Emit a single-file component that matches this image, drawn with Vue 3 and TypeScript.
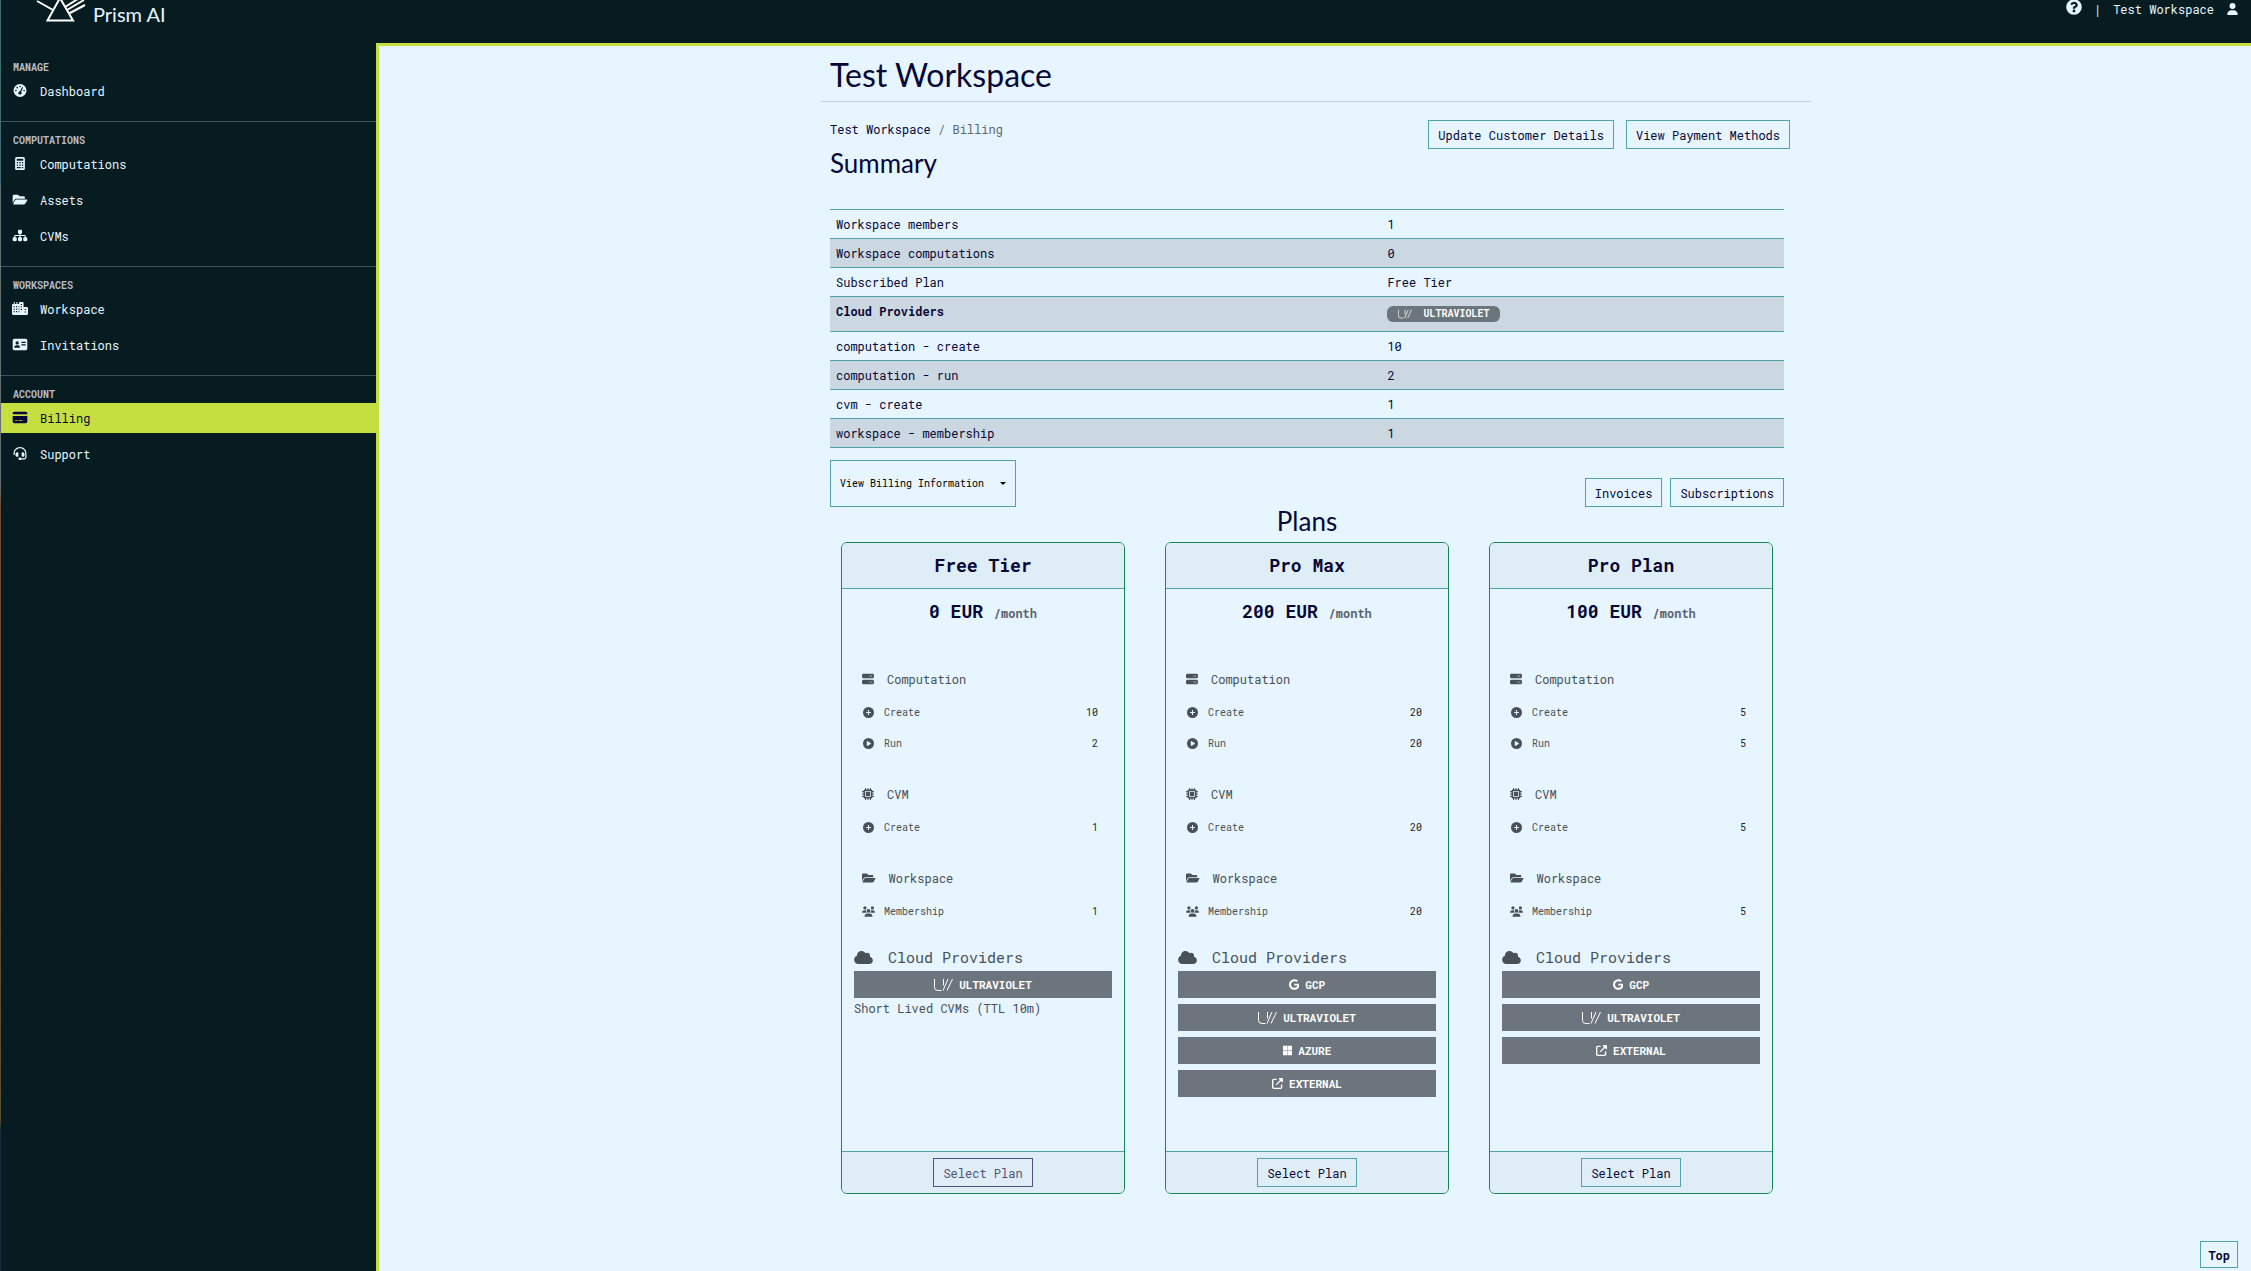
<script setup lang="ts">
interface Icon {
  w: number
  h: number
  d: string
}

const icons: Record<string, Icon> = {
  gauge: {
    w: 512,
    h: 512,
    d: 'M0 256a256 256 0 1 1 512 0A256 256 0 1 1 0 256zM288 96a32 32 0 1 0-64 0 32 32 0 1 0 64 0zM256 416c35.300 0 64-28.700 64-64 0-17-7-33-18-44l70-152c5-12 0-26-12-31s-26 0-31 12l-70 152c-38-2-67 27-67 63 0 35.300 28.700 64 64 64zM176 144a32 32 0 1 0-64 0 32 32 0 1 0 64 0zM96 288a32 32 0 1 0 0-64 32 32 0 1 0 0 64zm352-32a32 32 0 1 0-64 0 32 32 0 1 0 64 0z',
  },
  calculator: {
    w: 384,
    h: 512,
    d: 'M64 0h256c35 0 64 29 64 64v384c0 35-29 64-64 64H64c-35 0-64-29-64-64V64C0 29 29 0 64 0zm0 64v80h256V64H64zm0 128v52h56v-52H64zm100 0v52h56v-52h-56zm100 0v52h56v-52h-56zM64 292v52h56v-52H64zm100 0v52h56v-52h-56zm100 0v52h56v-52h-56zM64 392v52h156v-52H64zm200 0v52h56v-52h-56z',
  },
  folder: {
    w: 576,
    h: 512,
    d: 'M572.694 292.093L500.27 416.248A63.997 63.997 0 0 1 444.989 448H45.025c-18.523 0-30.064-20.093-20.731-36.093l72.424-124.155A64 64 0 0 1 152 256h399.964c18.523 0 30.064 20.093 20.730 36.093zM152 224h328v-48c0-26.510-21.490-48-48-48H272l-64-64H48C21.490 64 0 85.490 0 112v278.046l69.077-118.418C86.214 242.250 117.989 224 152 224z',
  },
  sitemap: {
    w: 576,
    h: 512,
    d: 'M208 80c0-26.5 21.5-48 48-48h64c26.5 0 48 21.5 48 48v64c0 26.5-21.5 48-48 48h-8v40H464c30.9 0 56 25.1 56 56v32h8c26.5 0 48 21.5 48 48v64c0 26.5-21.5 48-48 48H464c-26.5 0-48-21.5-48-48V368c0-26.5 21.5-48 48-48h8V288c0-4.4-3.6-8-8-8H312v40h8c26.5 0 48 21.5 48 48v64c0 26.5-21.5 48-48 48H256c-26.5 0-48-21.5-48-48V368c0-26.5 21.5-48 48-48h8V280H112c-4.4 0-8 3.6-8 8v32h8c26.5 0 48 21.5 48 48v64c0 26.5-21.5 48-48 48H48c-26.5 0-48-21.5-48-48V368c0-26.5 21.5-48 48-48h8V288c0-30.9 25.1-56 56-56H264V192h-8c-26.5 0-48-21.5-48-48V80z',
  },
  city: {
    w: 640,
    h: 512,
    d: 'M72 0h40v80h64V0h40v80h64V48c0-26 22-48 48-48h88c26 0 48 22 48 48v144h124c28 0 52 22 52 48v224c0 26-22 48-48 48H48c-26 0-48-22-48-48V128c0-26 22-48 48-48h24V0zM64 160v44h44v-44H64zm100 0v44h44v-44h-44zM64 260v44h44v-44H64zm100 0v44h44v-44h-44zM64 360v44h44v-44H64zm100 0v44h44v-44h-44zM264 160v44h30v-44h-30zm0 100v44h30v-44h-30zm0 100v44h30v-44h-30zM350 72v44h50V72h-50zm0 100v44h50v-44h-50zm0 100v44h50v-44h-50zm160 0v44h54v-44h-54zm0 100v44h54v-44h-54z',
  },
  idcard: {
    w: 576,
    h: 512,
    d: 'M64 32h448c35 0 64 29 64 64v320c0 35-29 64-64 64H64c-35 0-64-29-64-64V96c0-35 29-64 64-64zm112 224a64 64 0 1 0 0-128 64 64 0 1 0 0 128zm-32 32c-44 0-80 36-80 80 0 9 7 16 16 16h192c9 0 16-7 16-16 0-44-36-80-80-80h-64zM344 144v48h168v-48H344zm0 100v48h168v-48H344z',
  },
  card: {
    w: 576,
    h: 512,
    d: 'M64 32C28.7 32 0 60.7 0 96v32H576V96c0-35.3-28.7-64-64-64H64zM576 192H0V416c0 35.3 28.7 64 64 64H512c35.3 0 64-28.7 64-64V192zM112 352h64c8.8 0 16 7.2 16 16s-7.2 16-16 16H112c-8.8 0-16-7.2-16-16s7.2-16 16-16zm112 16c0-8.8 7.2-16 16-16H368c8.8 0 16 7.2 16 16s-7.2 16-16 16H240c-8.8 0-16-7.2-16-16z',
  },
  headset: {
    w: 512,
    h: 512,
    d: 'M256 48C141 48 48 141 48 256v40c0 13-11 24-24 24S0 309 0 296v-40C0 115 115 0 256 0s256 115 256 256v144c0 49-40 88-88 88H313c-8 14-23 24-41 24h-32a48 48 0 1 1 0-96h32c18 0 33 10 41 24h111c22 0 40-18 40-40V256c0-115-93-208-208-208zM144 208h16c18 0 32 14 32 32v112c0 18-14 32-32 32h-16c-35 0-64-29-64-64v-48c0-35 29-64 64-64zm224 0c35 0 64 29 64 64v48c0 35-29 64-64 64h-16c-18 0-32-14-32-32V240c0-18 14-32 32-32h16z',
  },
  user: {
    w: 448,
    h: 512,
    d: 'M224 256A128 128 0 1 0 224 0a128 128 0 1 0 0 256zm-45.7 48C79.8 304 0 383.8 0 482.3C0 498.7 13.3 512 29.7 512H418.3c16.4 0 29.7-13.3 29.7-29.7C448 383.8 368.2 304 269.7 304H178.3z',
  },
  help: {
    w: 512,
    h: 512,
    d: 'M504 256c0 136.997-111.043 248-248 248S8 392.997 8 256C8 119.083 119.043 8 256 8s248 111.083 248 248zM262.655 90c-54.497 0-89.255 22.957-116.549 63.758-3.536 5.286-2.353 12.415 2.715 16.258l34.699 26.310c5.205 3.947 12.621 3.008 16.665-2.122 17.864-22.658 30.113-35.797 57.303-35.797 20.429 0 45.698 13.148 45.698 32.958 0 14.976-12.363 22.667-32.534 33.976C247.128 238.528 216 254.941 216 296v4c0 6.627 5.373 12 12 12h56c6.627 0 12-5.373 12-12v-1.333c0-28.462 83.186-29.647 83.186-106.667 0-58.002-60.165-102-116.531-102zM256 338c-25.365 0-46 20.635-46 46 0 25.364 20.635 46 46 46s46-20.636 46-46c0-25.364-20.635-46-46-46z',
  },
  server: {
    w: 512,
    h: 512,
    d: 'M64 32C28.7 32 0 60.7 0 96v64c0 35.3 28.7 64 64 64H448c35.3 0 64-28.7 64-64V96c0-35.3-28.7-64-64-64H64zm280 72a24 24 0 1 1 0 48 24 24 0 1 1 0-48zm48 24a24 24 0 1 1 48 0 24 24 0 1 1 -48 0zM64 288c-35.3 0-64 28.7-64 64v64c0 35.3 28.7 64 64 64H448c35.3 0 64-28.7 64-64V352c0-35.3-28.7-64-64-64H64zm280 72a24 24 0 1 1 0 48 24 24 0 1 1 0-48zm56 24a24 24 0 1 1 48 0 24 24 0 1 1 -48 0z',
  },
  chip: {
    w: 512,
    h: 512,
    d: 'M176 24c0-13.3-10.7-24-24-24s-24 10.7-24 24V64c-35.3 0-64 28.7-64 64H24c-13.3 0-24 10.7-24 24s10.7 24 24 24H64v56H24c-13.3 0-24 10.7-24 24s10.7 24 24 24H64v56H24c-13.3 0-24 10.7-24 24s10.7 24 24 24H64c0 35.3 28.7 64 64 64v40c0 13.3 10.7 24 24 24s24-10.7 24-24V448h56v40c0 13.3 10.7 24 24 24s24-10.7 24-24V448h56v40c0 13.3 10.7 24 24 24s24-10.7 24-24V448c35.3 0 64-28.7 64-64h40c13.3 0 24-10.7 24-24s-10.7-24-24-24H448V280h40c13.3 0 24-10.7 24-24s-10.7-24-24-24H448V176h40c13.3 0 24-10.7 24-24s-10.7-24-24-24H448c0-35.3-28.7-64-64-64V24c0-13.3-10.7-24-24-24s-24 10.7-24 24V64H280V24c0-13.3-10.7-24-24-24s-24 10.7-24 24V64H176V24zM160 128H352c17.7 0 32 14.3 32 32V352c0 17.7-14.3 32-32 32H160c-17.7 0-32-14.3-32-32V160c0-17.7 14.3-32 32-32zm192 32H160V352H352V160z',
  },
  plus: {
    w: 512,
    h: 512,
    d: 'M256 0a256 256 0 1 1 0 512 256 256 0 1 1 0-512zM232 144v88h-88v48h88v88h48v-88h88v-48h-88v-88h-48z',
  },
  play: {
    w: 512,
    h: 512,
    d: 'M256 0a256 256 0 1 1 0 512 256 256 0 1 1 0-512zM188 147c-8 4-12 12-12 21v176c0 9 5 17 12 21s17 4 25 0l144-88c7-4 11-12 11-21s-4-16-11-20l-144-88c-8-5-17-5-25-1z',
  },
  people: {
    w: 640,
    h: 512,
    d: 'M144 0a80 80 0 1 1 0 160A80 80 0 1 1 144 0zM512 0a80 80 0 1 1 0 160A80 80 0 1 1 512 0zM0 298.700C0 239.800 47.800 192 106.700 192h42.700c15.900 0 31 3.500 44.600 9.700-1.300 7.200-1.900 14.700-1.900 22.300 0 38.200 16.800 72.500 43.300 96H21.300C9.600 320 0 310.400 0 298.700zM405.300 320H404.700c26.600-23.500 43.300-57.800 43.300-96 0-7.600-.7-15-1.900-22.300 13.600-6.300 28.700-9.700 44.600-9.700h42.700C592.200 192 640 239.800 640 298.700c0 11.800-9.600 21.300-21.300 21.300H405.300zM224 224a96 96 0 1 1 192 0 96 96 0 1 1-192 0zM128 485.300C128 411.700 187.700 352 261.300 352H378.700C452.300 352 512 411.700 512 485.300c0 14.700-11.900 26.700-26.700 26.700H154.700c-14.700 0-26.700-11.900-26.700-26.700z',
  },
  cloud: {
    w: 640,
    h: 512,
    d: 'M0 336c0 79.5 64.5 144 144 144H512c70.7 0 128-57.3 128-128c0-61.9-44-113.6-102.4-125.4c4.1-10.7 6.4-22.4 6.4-34.6c0-53-43-96-96-96c-19.7 0-38.1 6-53.3 16.2C367 64.2 315.3 32 256 32C167.6 32 96 103.6 96 192c0 2.7 .1 5.4 .2 8.1C40.2 219.8 0 273.2 0 336z',
  },
  GCP: {
    w: 488,
    h: 512,
    d: 'M488 261.8C488 403.3 391.1 504 248 504 110.8 504 0 393.2 0 256S110.8 8 248 8c66.8 0 123 24.5 166.3 64.9l-67.5 64.9C258.5 52.6 94.3 116.6 94.3 256c0 86.5 69.1 156.6 153.7 156.6 98.2 0 135-70.4 140.8-106.9H248v-85.3h236.1c2.3 12.7 3.9 24.9 3.9 41.4z',
  },
  AZURE: {
    w: 448,
    h: 512,
    d: 'M0 32h214.600v214.600H0V32zm233.400 0H448v214.600H233.400V32zM0 265.400h214.600V480H0V265.400zm233.400 0H448V480H233.400V265.400z',
  },
  EXTERNAL: {
    w: 512,
    h: 512,
    d: 'M352 0c-13 0-25 8-30 20s-2 25 7 35l42 41-178 178c-13 12-13 33 0 45s32 13 45 0l178-178 41 42c10 9 23 12 35 7s20-17 20-30V32c0-18-14-32-32-32H352zM80 32C36 32 0 68 0 112v320c0 44 36 80 80 80h320c44 0 80-36 80-80V320a32 32 0 1 0-64 0v112c0 9-7 16-16 16H80c-9 0-16-7-16-16V112c0-9 7-16 16-16h112a32 32 0 1 0 0-64H80z',
  },
}

const navigation = [
  { title: 'Manage', items: [{ label: 'Dashboard', icon: 'gauge' }] },
  {
    title: 'Computations',
    items: [
      { label: 'Computations', icon: 'calculator' },
      { label: 'Assets', icon: 'folder' },
      { label: 'CVMs', icon: 'sitemap' },
    ],
  },
  {
    title: 'Workspaces',
    items: [
      { label: 'Workspace', icon: 'city' },
      { label: 'Invitations', icon: 'idcard' },
    ],
  },
  {
    title: 'Account',
    items: [
      { label: 'Billing', icon: 'card' },
      { label: 'Support', icon: 'headset' },
    ],
  },
]

const activeItem = 'Billing'

const summary = [
  { label: 'Workspace members', value: '1' },
  { label: 'Workspace computations', value: '0' },
  { label: 'Subscribed Plan', value: 'Free Tier' },
  { label: 'Cloud Providers', value: 'ULTRAVIOLET', badge: true },
  { label: 'computation - create', value: '10' },
  { label: 'computation - run', value: '2' },
  { label: 'cvm - create', value: '1' },
  { label: 'workspace - membership', value: '1' },
]

const buildPlan = (
  name: string,
  price: number,
  create: number,
  run: number,
  cvm: number,
  members: number,
  providers: string[],
  note = '',
  current = false,
) => ({
  name,
  price,
  providers,
  note,
  current,
  groups: [
    {
      title: 'Computation',
      icon: 'server',
      rows: [
        { label: 'Create', icon: 'plus', value: create },
        { label: 'Run', icon: 'play', value: run },
      ],
    },
    { title: 'CVM', icon: 'chip', rows: [{ label: 'Create', icon: 'plus', value: cvm }] },
    { title: 'Workspace', icon: 'folder', rows: [{ label: 'Membership', icon: 'people', value: members }] },
  ],
})

const plans = [
  buildPlan('Free Tier', 0, 10, 2, 1, 1, ['ULTRAVIOLET'], 'Short Lived CVMs (TTL 10m)', true),
  buildPlan('Pro Max', 200, 20, 20, 20, 20, ['GCP', 'ULTRAVIOLET', 'AZURE', 'EXTERNAL']),
  buildPlan('Pro Plan', 100, 5, 5, 5, 5, ['GCP', 'ULTRAVIOLET', 'EXTERNAL']),
]

const box = (name: string) => `0 0 ${icons[name].w} ${icons[name].h}`
const toTop = () => window.scrollTo({ top: 0 })
</script>

<template>
  <div class="page">
    <header class="topbar">
      <a href="#" class="brand">
        <svg class="prism" viewBox="0 0 50 22" aria-hidden="true">
          <path d="M24 -2 L11.500 20.500 H37 Z M1 1 L17 10 M29 7 L45 -3 M31 10 L48 0 M33 13.500 L49 5" />
        </svg>
        <span>Prism AI</span>
      </a>
      <div class="account">
        <a href="#" aria-label="Help">
          <svg class="help" :viewBox="box('help')"><path :d="icons.help.d" /></svg>
        </a>
        <span class="bar">|</span>
        <a href="#">Test Workspace</a>
        <a href="#" aria-label="Profile">
          <svg class="user" :viewBox="box('user')"><path :d="icons.user.d" /></svg>
        </a>
      </div>
    </header>

    <div class="columns">
      <nav class="sidebar">
        <section v-for="group in navigation" :key="group.title">
          <h2>{{ group.title }}</h2>
          <a
            v-for="item in group.items"
            :key="item.label"
            href="#"
            :class="{ active: item.label === activeItem }"
          >
            <svg :viewBox="box(item.icon)" aria-hidden="true">
              <path fill-rule="evenodd" :d="icons[item.icon].d" />
            </svg>
            <span>{{ item.label }}</span>
          </a>
        </section>
      </nav>

      <main>
        <div class="container">
          <h1>Test Workspace</h1>

          <div class="toolbar">
            <div>
              <div class="crumbs">
                <a href="#">Test Workspace</a> <span>/ Billing</span>
              </div>
              <h2>Summary</h2>
            </div>
            <div class="actions wide">
              <button type="button" class="btn">Update Customer Details</button>
              <button type="button" class="btn">View Payment Methods</button>
            </div>
          </div>

          <div class="content">
            <table>
              <tbody>
                <tr v-for="row in summary" :key="row.label">
                  <th scope="row" :class="{ strong: row.badge }">{{ row.label }}</th>
                  <td>
                    <span v-if="row.badge" class="badge">
                      <svg class="uv" viewBox="0 0 19 12" aria-hidden="true">
                        <path d="M.5 0V8.500Q.5 11.500 4 11.500H7.500M9.500 0V6.500M14 0L9 11.500M18.500 0L13 11.500" />
                      </svg>
                      {{ row.value }}
                    </span>
                    <template v-else>{{ row.value }}</template>
                  </td>
                </tr>
              </tbody>
            </table>

            <div class="billing">
              <button type="button" class="btn dropdown">
                View Billing Information <i class="caret"></i>
              </button>
              <div class="actions">
                <button type="button" class="btn">Invoices</button>
                <button type="button" class="btn">Subscriptions</button>
              </div>
            </div>

            <h2 class="plans-title">Plans</h2>

            <div class="plans">
              <article v-for="plan in plans" :key="plan.name" class="card">
                <h3>{{ plan.name }}</h3>
                <div class="card-body">
                  <p class="price">{{ plan.price }} EUR <small>/month</small></p>
                  <section v-for="group in plan.groups" :key="group.title" class="group">
                    <h4>
                      <svg :viewBox="box(group.icon)" aria-hidden="true">
                        <path fill-rule="evenodd" :d="icons[group.icon].d" />
                      </svg>
                      {{ group.title }}
                    </h4>
                    <div v-for="row in group.rows" :key="row.label" class="limit">
                      <svg :viewBox="box(row.icon)" aria-hidden="true">
                        <path fill-rule="evenodd" :d="icons[row.icon].d" />
                      </svg>
                      <span>{{ row.label }}</span>
                      <span class="amount">{{ row.value }}</span>
                    </div>
                  </section>
                  <h4 class="cloud">
                    <svg :viewBox="box('cloud')" aria-hidden="true"><path :d="icons.cloud.d" /></svg>
                    Cloud Providers
                  </h4>
                  <div class="providers">
                    <div v-for="provider in plan.providers" :key="provider" class="provider">
                      <svg v-if="provider === 'ULTRAVIOLET'" class="uv" viewBox="0 0 19 12" aria-hidden="true">
                        <path d="M.5 0V8.500Q.5 11.500 4 11.500H7.500M9.500 0V6.500M14 0L9 11.500M18.500 0L13 11.500" />
                      </svg>
                      <svg v-else class="logo" :viewBox="box(provider)" aria-hidden="true">
                        <path :d="icons[provider].d" />
                      </svg>
                      {{ provider }}
                    </div>
                  </div>
                  <p v-if="plan.note" class="note">{{ plan.note }}</p>
                </div>
                <footer>
                  <button type="button" class="btn" :disabled="plan.current">Select Plan</button>
                </footer>
              </article>
            </div>
          </div>
        </div>
      </main>
    </div>

    <button type="button" class="btn top" @click="toTop">Top</button>
  </div>
</template>

<style>
body {
  margin: 0;
  background: #e6f5ff;
}
</style>

<style scoped>
.page {
  display: flex;
  flex-direction: column;
  min-height: 100vh;
  box-sizing: border-box;
  padding-left: 1px;
  font-family: 'Roboto Mono', 'Liberation Mono', monospace;
  font-size: 12px;
  line-height: 20px;
  color: #070738;
  background: linear-gradient(#3c6c74 14%, #66716f 15%, #66716f 38%, #6b4a36 40%, #6b4a36 62%, #5c5230 88%, #1c2c40 89%);
}
.page * {
  box-sizing: border-box;
}
h1,
h2,
h3,
h4,
p {
  margin: 0;
}
a {
  color: inherit;
  text-decoration: none;
}
svg {
  display: block;
  flex: none;
  fill: currentColor;
}

.topbar {
  display: flex;
  justify-content: space-between;
  align-items: flex-start;
  height: 43px;
  padding: 0 13px 0 35px;
  background: #071c21;
  color: #e6f5ff;
}
.brand {
  display: flex;
  gap: 7px;
  font-family: Lato, sans-serif;
  font-size: 20px;
  line-height: 28px;
}
.prism {
  width: 50px;
  height: 22px;
  fill: none;
  stroke: #fff;
  stroke-width: 2;
}
.account {
  display: flex;
  align-items: center;
  height: 18px;
}
.account svg {
  height: 12px;
}
.account .help {
  width: 16px;
  height: 16px;
  margin-bottom: 5px;
}
.bar {
  margin: 0 12px;
}
.user {
  width: 11px;
  margin-left: 13px;
}

.columns {
  display: flex;
  flex: 1;
}
.sidebar {
  flex: none;
  width: 375px;
  background: #071c21;
  color: #e6f5ff;
}
.sidebar section {
  padding-bottom: 15px;
}
.sidebar section + section {
  border-top: 1px solid #435258;
}
.sidebar section:first-child {
  padding-top: 6px;
}
.sidebar h2 {
  padding: 9px 12px 0;
  height: 27px;
  font-size: 10px;
  line-height: 18px;
  color: #b9bdcb;
  text-transform: uppercase;
}
.sidebar section:nth-child(n) h2 {
  line-height: 20px;
}
.sidebar a {
  display: flex;
  align-items: center;
  gap: 12px;
  height: 30px;
  padding: 0 11px;
}
.sidebar a + a {
  margin-top: 6px;
}
.sidebar a svg {
  width: 16px;
  height: 13px;
  margin-bottom: 2px;
}
.sidebar .active {
  background: #c5df41;
  color: #070738;
}

main {
  flex: 1;
  min-width: 0;
  padding-left: 2px;
  border-top: 3px solid #c5df41;
  border-left: 3px solid #c5df41;
  background: #e6f5ff;
}
.container {
  max-width: 990px;
  margin: 0 auto;
  padding-bottom: 48px;
}
h1,
.toolbar h2,
.plans-title {
  font-family: Lato, sans-serif;
  font-weight: 400;
}
h1 {
  height: 56px;
  padding: 0 9px;
  font-size: 32px;
  line-height: 58px;
  border-bottom: 1px solid #c6cdd3;
}
.toolbar {
  display: flex;
  justify-content: space-between;
  align-items: flex-start;
  padding: 18px 21px 32px 9px;
}
.crumbs {
  line-height: 18px;
}
.crumbs span {
  color: #5f666d;
}
.toolbar h2,
.plans-title {
  font-size: 26px;
  line-height: 28px;
}
.toolbar h2 {
  margin-top: 11px;
}
.actions {
  display: flex;
  gap: 8px;
}
.actions.wide {
  gap: 12px;
}
.btn {
  height: 29px;
  padding: 0 9px;
  border: 1px solid #4fa3ad;
  background: transparent;
  color: #070738;
  font: inherit;
}
.btn:disabled {
  color: #51517a;
  border-color: #51518a;
}

.content {
  padding: 0 27px 0 9px;
}
table {
  width: 100%;
  table-layout: fixed;
  border-collapse: collapse;
  border-top: 1px solid #4fa3ad;
}
tr {
  height: 29px;
  border-bottom: 1px solid #4fa3ad;
}
tr:nth-child(even) {
  background: #cbd8e1;
}
th,
td {
  padding: 4px 6px;
  text-align: left;
  vertical-align: top;
}
th {
  width: 57.8%;
  font-weight: 400;
}
th.strong {
  font-weight: 700;
}
.badge {
  display: flex;
  align-items: center;
  gap: 11px;
  width: max-content;
  height: 16px;
  margin: 5px 0;
  padding: 0 11px;
  border-radius: 6px;
  background: #6c757d;
  color: #fff;
  font-size: 10px;
  font-weight: 700;
}
.uv {
  width: 19px;
  height: 12px;
  fill: none;
  stroke: #fff;
}
.badge .uv {
  width: 14px;
  height: 10px;
}

.billing {
  display: flex;
  justify-content: space-between;
  align-items: flex-end;
  margin-top: 12px;
}
.dropdown {
  display: flex;
  align-items: center;
  justify-content: space-between;
  width: 186px;
  height: 47px;
  font-size: 10px;
  color: #000;
}
.caret {
  border: 3px solid transparent;
  border-top-color: #000;
  border-bottom: 0;
}
.plans-title {
  margin-bottom: 7px;
  line-height: 28px;
  text-align: center;
}
.plans {
  display: grid;
  grid-template-columns: repeat(3, 1fr);
  gap: 40px;
  padding: 0 11px;
}
.card {
  display: flex;
  flex-direction: column;
  border: 1px solid #198754;
  border-radius: 6px;
  overflow: hidden;
}
.card h3 {
  height: 46px;
  border-bottom: 1px solid #4fa3ad;
  background: #dfedf6;
  font-size: 18px;
  line-height: 44px;
  text-align: center;
}
.card-body {
  flex: 1;
  padding: 10px 12px 54px;
  color: #495057;
}
.price {
  height: 24px;
  margin-bottom: 46px;
  color: #070738;
  font-size: 18px;
  font-weight: 700;
  line-height: 24px;
  text-align: center;
}
.price small {
  font-size: 12px;
  line-height: 12px;
  color: #5a626b;
}
.group {
  padding: 0 14px 0 8px;
  margin-bottom: 25px;
}
.card h4 {
  display: flex;
  align-items: center;
  gap: 13px;
  font-weight: 400;
}
.group h4 {
  margin-bottom: 8px;
}
.group h4 svg {
  min-width: 12px;
  height: 12px;
}
.limit {
  display: flex;
  align-items: center;
  gap: 9px;
  height: 31px;
  font-size: 10px;
}
.limit svg {
  width: 13px;
  height: 11px;
}
.amount {
  margin-left: auto;
  color: #212529;
}
.card .cloud {
  gap: 15px;
  margin-top: -5px;
  font-size: 15px;
}
.cloud svg {
  width: 19px;
  height: 15px;
}
.providers {
  display: grid;
  gap: 6px;
  margin-top: 4px;
}
.provider {
  display: flex;
  align-items: center;
  justify-content: center;
  gap: 6px;
  height: 27px;
  background: #6c757d;
  color: #fff;
  font-size: 11px;
  font-weight: 700;
}
.logo {
  height: 11px;
}
.card footer {
  display: flex;
  justify-content: center;
  padding: 6px;
  border-top: 1px solid #4fa3ad;
  background: #dfedf6;
}

.top {
  position: fixed;
  right: 13px;
  bottom: 3px;
  height: 27px;
  padding: 0 7px;
  font-weight: 700;
  background: #e6f5ff;
}
</style>
